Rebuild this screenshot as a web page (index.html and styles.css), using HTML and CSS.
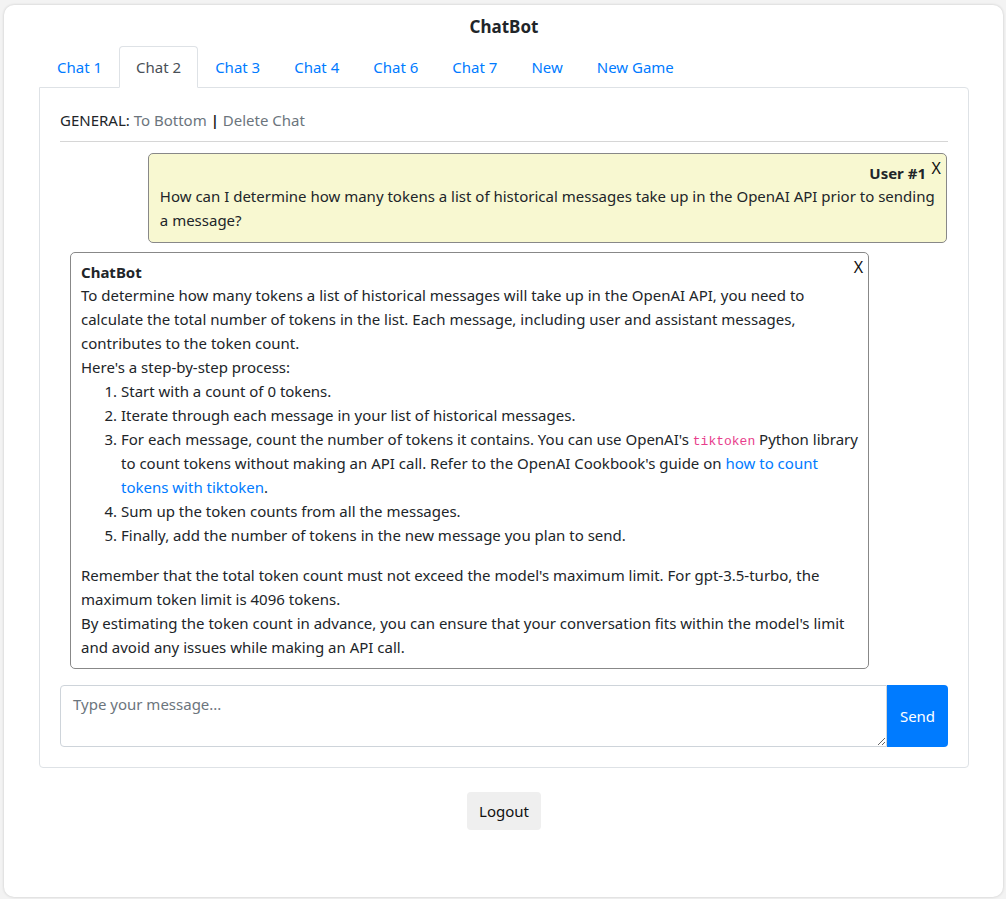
FILE: index.html
```html
<!DOCTYPE html>
<html lang="en">
<head>
<meta charset="utf-8">
<title>ChatBot</title>
<link rel="stylesheet" href="styles.css">
</head>
<body>
<div class="card">
  <h1 class="title">ChatBot</h1>
  <ul class="tabs">
    <li><a class="tab" href="#">Chat 1</a></li>
    <li><a class="tab active" href="#">Chat 2</a></li>
    <li><a class="tab" href="#">Chat 3</a></li>
    <li><a class="tab" href="#">Chat 4</a></li>
    <li><a class="tab" href="#">Chat 6</a></li>
    <li><a class="tab" href="#">Chat 7</a></li>
    <li><a class="tab" href="#">New</a></li>
    <li><a class="tab" href="#">New Game</a></li>
  </ul>
  <div class="panel">
    <div class="general">GENERAL: <a class="muted" href="#">To Bottom</a> <span class="sep">|</span> <a class="muted" href="#">Delete Chat</a></div>
    <hr class="rule">
    <div class="msg user">
      <span class="close">X</span>
      <div class="msg-head">User #1</div>
      <div class="msg-body">How can I determine how many tokens a list of historical messages take up in the OpenAI API prior to sending a message?</div>
    </div>
    <div class="msg bot">
      <span class="close">X</span>
      <div class="msg-head">ChatBot</div>
      <div class="msg-body">
        <div>To determine how many tokens a list of historical messages will take up in the OpenAI API, you need to calculate the total number of tokens in the list. Each message, including user and assistant messages, contributes to the token count.</div>
        <div>Here's a step-by-step process:</div>
        <ol class="steps">
          <li>Start with a count of 0 tokens.</li>
          <li>Iterate through each message in your list of historical messages.</li>
          <li>For each message, count the number of tokens it contains. You can use OpenAI's <code class="code">tiktoken</code> Python library to count tokens without making an API call. Refer to the OpenAI Cookbook's guide on <a class="link" href="#">how to count tokens with tiktoken</a>.</li>
          <li>Sum up the token counts from all the messages.</li>
          <li>Finally, add the number of tokens in the new message you plan to send.</li>
        </ol>
        <div>Remember that the total token count must not exceed the model's maximum limit. For gpt-3.5-turbo, the maximum token limit is 4096 tokens.</div>
        <div>By estimating the token count in advance, you can ensure that your conversation fits within the model's limit and avoid any issues while making an API call.</div>
      </div>
    </div>
    <div class="composer">
      <textarea class="input" rows="2" placeholder="Type your message..."></textarea>
      <button class="send" type="button">Send</button>
    </div>
  </div>
  <div class="logout-row">
    <button class="logout" type="button">Logout</button>
  </div>
</div>
</body>
</html>
```
FILE: styles.css
```css
* { box-sizing: border-box; }

html, body {
  margin: 0;
  background: #f3f3f3;
}

body {
  padding: 5px 3px 3px 4px;
  font-family: "Noto Sans", "Open Sans", sans-serif;
  font-size: 15px;
  line-height: 24px;
  color: #212529;
}

.card {
  background: #fff;
  border-radius: 10px;
  box-shadow: 0 0 3px rgba(0, 0, 0, 0.18);
  padding: 10px 34px 67px 35px;
}

.title {
  margin: 0 0 7px;
  text-align: center;
  font-size: 17px;
  line-height: 24px;
  font-weight: 700;
  color: #212529;
}

.tabs {
  display: flex;
  list-style: none;
  margin: 0 0 -1px 1px;
  padding: 0;
  position: relative;
  z-index: 1;
}

.tab {
  display: block;
  padding: 8px 16px;
  border: 1px solid transparent;
  border-radius: 4px 4px 0 0;
  color: #007bff;
  text-decoration: none;
}

.tab.active {
  color: #495057;
  background: #fff;
  border-color: #dee2e6 #dee2e6 #fff;
}

.panel {
  border: 1px solid #dee2e6;
  border-radius: 0 4px 4px 4px;
  padding: 20px;
}

.general {
  color: #212529;
}

.muted {
  color: #6c757d;
  text-decoration: none;
}

.sep {
  color: #111;
  font-weight: 600;
}

.rule {
  margin: 9px 0 10px;
  border: 0;
  border-top: 1px solid #d6d6d6;
}

.msg {
  position: relative;
  width: 90%;
  border: 1px solid #888;
  border-radius: 5px;
  padding: 9px 10px 10px 11px;
}

.msg.user {
  margin-top: 11px;
  margin-left: auto;
  margin-right: 1px;
  background: #f8f8d1;
}

.msg.bot {
  margin: 9px 0 0 10px;
  background: #fff;
  padding-left: 10px;
  padding-bottom: 9px;
}

.msg-head {
  font-weight: 700;
  line-height: 21px;
}

.msg.user .msg-head {
  text-align: right;
  margin-right: 10px;
}

.close {
  position: absolute;
  top: 2px;
  right: 5px;
  font-size: 16px;
  line-height: 24px;
  color: #111;
}

.steps {
  margin: 0 0 16px;
  padding-left: 40px;
}

.code {
  font-family: "Liberation Mono", monospace;
  font-size: 13px;
  line-height: 1;
  color: #e83e8c;
}

.link {
  color: #007bff;
  text-decoration: none;
}

.composer {
  display: flex;
  margin-top: 16px;
}

.input {
  flex: 1;
  height: 62px;
  margin: 0;
  padding: 6px 12px;
  border: 1px solid #ced4da;
  border-radius: 4px 0 0 4px;
  font-family: "Noto Sans", "Open Sans", sans-serif;
  font-size: 15px;
  line-height: 24px;
  color: #495057;
  outline: none;
}

.input::placeholder {
  color: #6c757d;
}

.send {
  width: 61px;
  border: 0;
  border-radius: 0 4px 4px 0;
  background: #007bff;
  color: #fff;
  font-family: "Noto Sans", "Open Sans", sans-serif;
  font-size: 15px;
  line-height: 24px;
  padding: 0;
}

.logout-row {
  display: flex;
  justify-content: center;
  margin-top: 24px;
}

.logout {
  padding: 7px 12px;
  border: 0;
  border-radius: 4px;
  background: #efefef;
  color: #111;
  font-family: "Noto Sans", "Open Sans", sans-serif;
  font-size: 15px;
  line-height: 24px;
}
```
